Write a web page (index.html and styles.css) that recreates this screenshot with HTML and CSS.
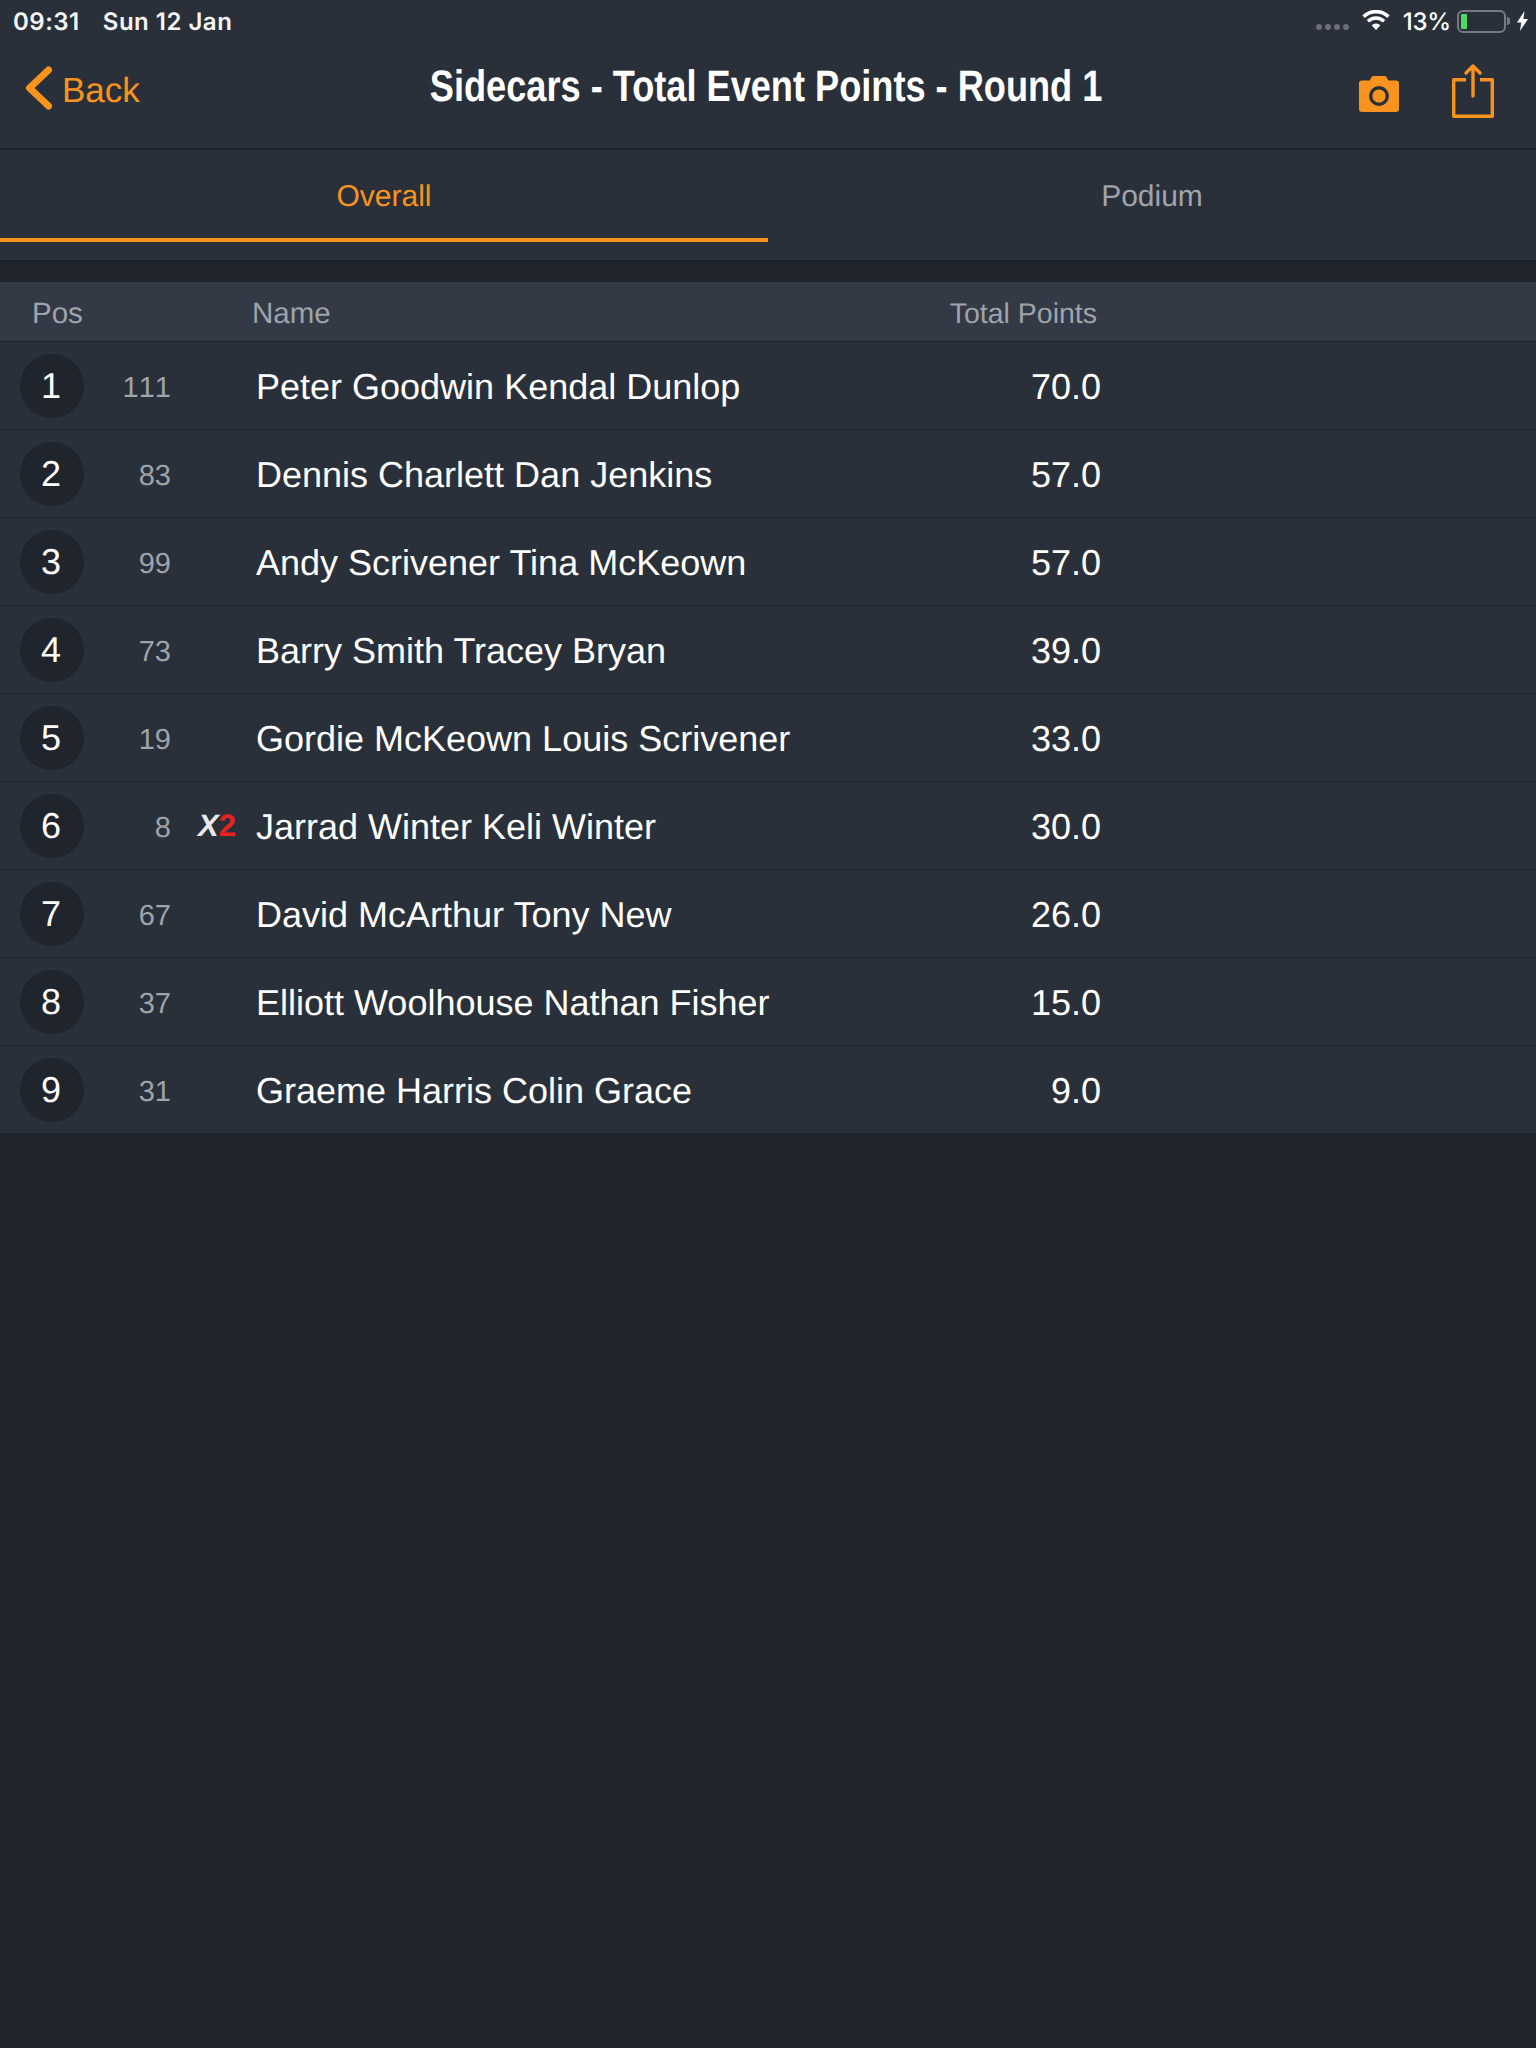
FILE: index.html
```html
<!DOCTYPE html>
<html lang="en">
<head>
<meta charset="utf-8">
<title>Sidecars - Total Event Points - Round 1</title>
<link rel="stylesheet" href="styles.css">
</head>
<body>
<header class="top">
  <div class="status">
    <div class="status-left"><span>09:31</span><span>Sun 12 Jan</span></div>
    <div class="status-right">
      <span class="dots"><i></i><i></i><i></i><i></i></span>
      <svg class="wifi" width="28" height="20" viewBox="0 0 28 20"><path d="M14 20 9.600 15.300a6.200 6.200 0 0 1 8.800 0Z" fill="#fff"/><path d="M6 11.300a11.400 11.400 0 0 1 16 0" fill="none" stroke="#fff" stroke-width="3.600"/><path d="M1.600 6.600a18 18 0 0 1 24.800 0" fill="none" stroke="#fff" stroke-width="3.600"/></svg>
      <span class="pct">13%</span>
      <span class="battery"><span class="level"></span></span><span class="nub"></span>
      <svg class="bolt" width="11" height="20" viewBox="0 0 11 20"><path d="M7.500 0 0 11.500h4.200L3 20 11 8H6.400Z" fill="#fff"/></svg>
    </div>
  </div>
  <nav class="nav">
    <div class="back">
      <svg width="30" height="46" viewBox="0 0 30 46"><path d="M24.500 5 5.500 23l19 18" fill="none" stroke="#f7931e" stroke-width="7" stroke-linecap="round" stroke-linejoin="round"/></svg>
      <span class="back-label">Back</span>
    </div>
    <h1 class="title">Sidecars - Total Event Points - Round 1</h1>
    <div class="actions">
      <svg class="camera" width="40" height="36" viewBox="0 0 40 36"><path d="M3 4.500H10.500L12.500 1.200Q13.200 0 14.500 0H25.500Q26.800 0 27.500 1.200L29.500 4.500H37a3 3 0 0 1 3 3V33a3 3 0 0 1-3 3H3a3 3 0 0 1-3-3V7.500a3 3 0 0 1 3-3Z" fill="#f7931e"/><circle cx="20" cy="20" r="8.300" fill="none" stroke="#2a303a" stroke-width="3.400"/></svg>
      <svg class="share" width="42" height="56" viewBox="0 0 42 56"><path d="M14 16.700H1.700v36.600h38.600V16.700H28" fill="none" stroke="#f7931e" stroke-width="3.400" stroke-linejoin="round"/><path d="M21 33V3M14 10l7-7 7 7" fill="none" stroke="#f7931e" stroke-width="3.400" stroke-linecap="round" stroke-linejoin="round"/></svg>
    </div>
  </nav>
</header>
<div class="tabs">
  <div class="tab active">Overall</div>
  <div class="tab">Podium</div>
</div>
<main class="table">
  <div class="head">
    <span class="h-pos">Pos</span>
    <span class="h-name">Name</span>
    <span class="h-points">Total Points</span>
  </div>
  <div class="row"><span class="pos">1</span><span class="num">111</span><span class="cls"></span><span class="name">Peter Goodwin Kendal Dunlop</span><span class="points">70.0</span></div>
  <div class="row"><span class="pos">2</span><span class="num">83</span><span class="cls"></span><span class="name">Dennis Charlett Dan Jenkins</span><span class="points">57.0</span></div>
  <div class="row"><span class="pos">3</span><span class="num">99</span><span class="cls"></span><span class="name">Andy Scrivener Tina McKeown</span><span class="points">57.0</span></div>
  <div class="row"><span class="pos">4</span><span class="num">73</span><span class="cls"></span><span class="name">Barry Smith Tracey Bryan</span><span class="points">39.0</span></div>
  <div class="row"><span class="pos">5</span><span class="num">19</span><span class="cls"></span><span class="name">Gordie McKeown Louis Scrivener</span><span class="points">33.0</span></div>
  <div class="row"><span class="pos">6</span><span class="num">8</span><span class="cls"><b class="x">X</b><b class="two">2</b></span><span class="name">Jarrad Winter Keli Winter</span><span class="points">30.0</span></div>
  <div class="row"><span class="pos">7</span><span class="num">67</span><span class="cls"></span><span class="name">David McArthur Tony New</span><span class="points">26.0</span></div>
  <div class="row"><span class="pos">8</span><span class="num">37</span><span class="cls"></span><span class="name">Elliott Woolhouse Nathan Fisher</span><span class="points">15.0</span></div>
  <div class="row"><span class="pos">9</span><span class="num">31</span><span class="cls"></span><span class="name">Graeme Harris Colin Grace</span><span class="points">9.0</span></div>
</main>
</body>
</html>
```
FILE: styles.css
```css
* { box-sizing: border-box; }
html, body { margin: 0; padding: 0; }
body {
  min-height: 2048px;
  background: #20242c;
  color: #fff;
  font-family: "Liberation Sans", Arial, sans-serif;
  text-rendering: geometricPrecision;
}
.top {
  height: 150px;
  background: #2a303a;
  border-bottom: 2px solid #1d2027;
}
.status {
  height: 42px;
  padding: 0 8px 0 13px;
  display: flex;
  justify-content: space-between;
  align-items: center;
}
.status-left {
  display: flex;
  gap: 23px;
  font-family: Inter, sans-serif;
  font-size: 24px;
  font-weight: 600;
  letter-spacing: 0.5px;
  color: #f4f5f6;
}
.status-right { display: flex; align-items: center; }
.dots { display: flex; gap: 3px; margin-top: 11px; margin-right: 13px; }
.dots i { width: 6px; height: 6px; border-radius: 50%; background: #6b6f76; }
.wifi { margin-right: 13px; margin-top: -2px; }
.pct { font-family: Inter, sans-serif; font-size: 24px; font-weight: 500; margin-right: 6px; letter-spacing: -0.2px; }
.battery {
  width: 49px;
  height: 23px;
  border: 2px solid #767a80;
  border-radius: 6px;
  padding: 2px;
  display: flex;
}
.level { width: 6px; background: #4cd964; border-radius: 1px; }
.nub { width: 3px; height: 8px; background: #767a80; margin-left: 1px; margin-right: 7px; border-radius: 0 3px 3px 0; }
.nav {
  height: 106px;
  padding: 0 26px 8px 24px;
  display: grid;
  grid-template-columns: 1fr auto 1fr;
  align-items: center;
}
.back {
  display: flex;
  align-items: center;
  gap: 8px;
  color: #f7931e;
  font-size: 35px;
  position: relative;
  top: -3px;
}
.back-label { padding-top: 5px; }
.title {
  margin: 0;
  font-size: 44px;
  font-weight: 700;
  line-height: 50px;
  white-space: nowrap;
  transform: scaleX(0.822);
  position: relative;
  top: -4px;
  left: -1px;
}
.actions { display: flex; justify-content: flex-end; align-items: center; gap: 53px; margin-right: 16px; }
.camera { margin-top: 6px; }
.tabs {
  height: 112px;
  display: flex;
  background: #2a303a;
  border-bottom: 2px solid #1d2027;
  padding-bottom: 18px;
}
.tab {
  flex: 1;
  display: flex;
  align-items: center;
  justify-content: center;
  padding-top: 6px;
  font-size: 30px;
  color: #9fa3aa;
  border-bottom: 4px solid transparent;
}
.tab.active { color: #f7931e; border-bottom-color: #f7931e; }
.table { margin-top: 20px; }
.head {
  height: 60px;
  background: #333945;
  border-bottom: 1px solid #1d2027;
  display: flex;
  align-items: center;
  padding-top: 5px;
  font-size: 29.500px;
  color: #9fa3aa;
}
.h-pos { margin-left: 32px; width: 220px; }
.h-name { width: 697px; }
.h-points { width: 148px; text-align: right; font-size: 28.500px; white-space: nowrap; }
.row {
  height: 88px;
  background: #2a303a;
  border-bottom: 1px solid #1f232b;
  display: flex;
  align-items: center;
}
.pos {
  width: 64px;
  height: 64px;
  margin-left: 20px;
  border-radius: 50%;
  background: #20242c;
  display: flex;
  align-items: center;
  justify-content: center;
  padding-right: 2px;
  font-size: 36px;
}
.num {
  width: 87px;
  text-align: right;
  padding-top: 5px;
  font-size: 29px;
  font-kerning: none;
  color: #9fa3aa;
}
.cls {
  width: 85px;
  display: flex;
  justify-content: flex-end;
  padding-right: 20px;
  font-size: 31px;
  line-height: 36px;
  font-style: italic;
}
.x { color: #e9e9e9; }
.two { color: #e8231d; font-style: normal; }
.name { width: 845px; padding-top: 2px; font-size: 36px; }
.points { width: 0; padding-top: 2px; white-space: nowrap; font-size: 36px; display: flex; justify-content: flex-end; }
```
